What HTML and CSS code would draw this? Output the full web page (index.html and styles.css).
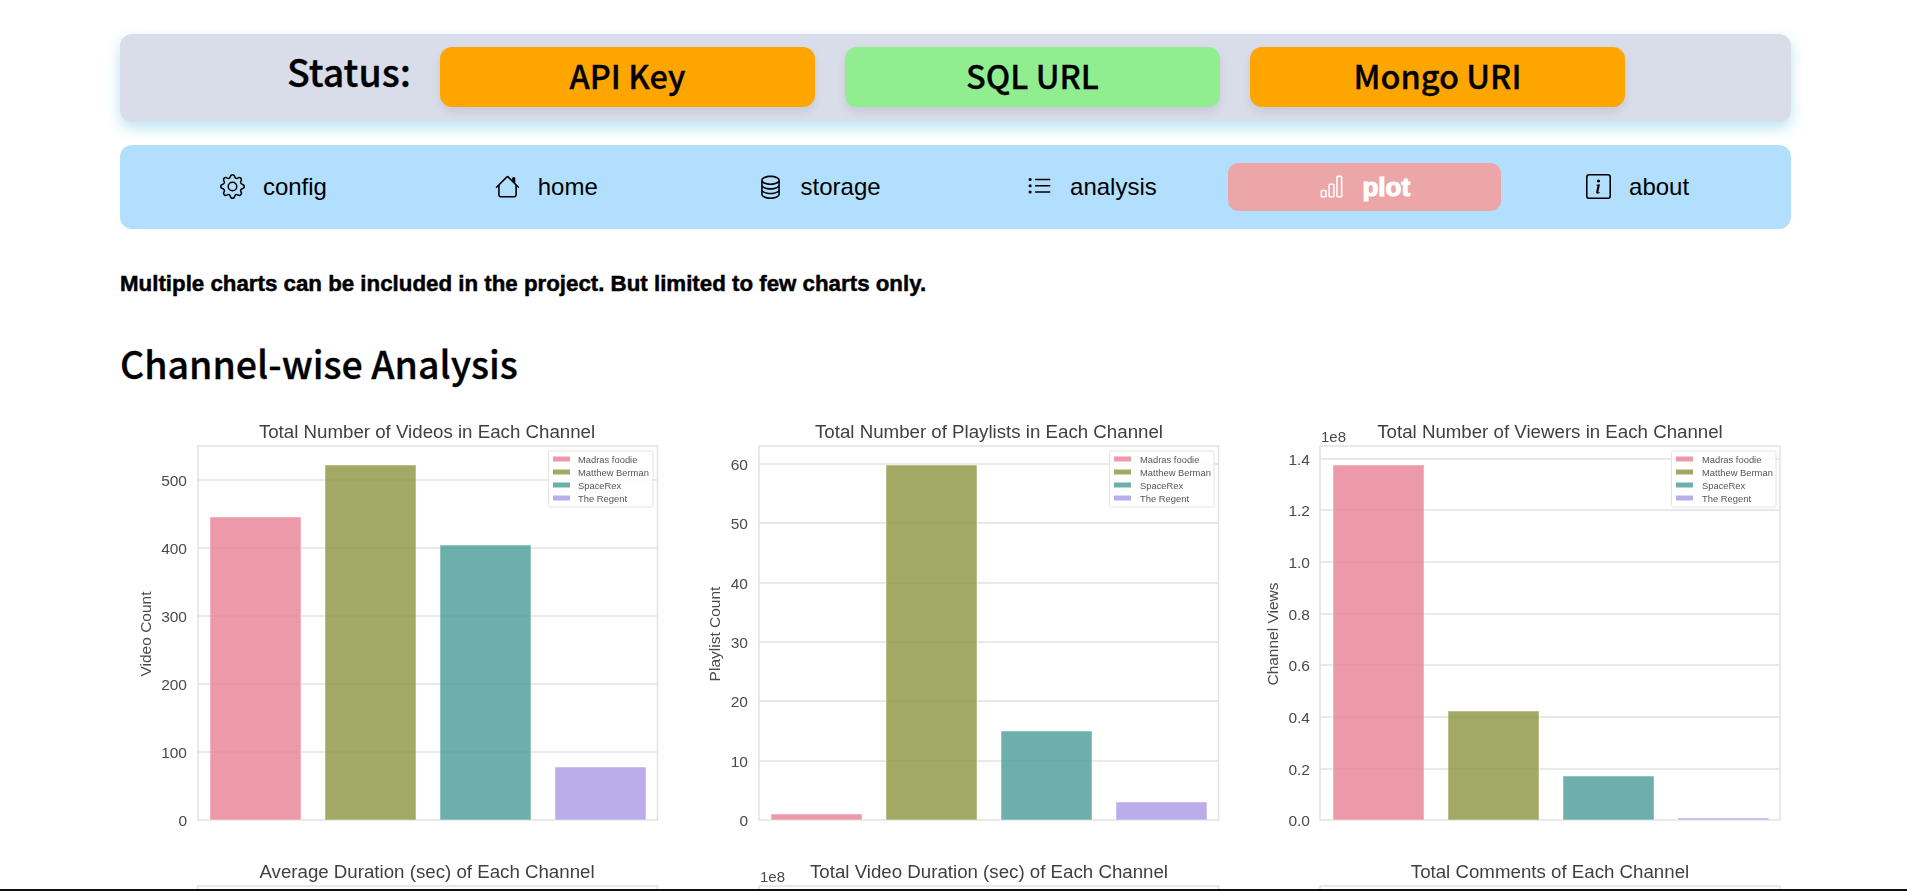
FILE: index.html
```html
<!DOCTYPE html>
<html lang="en">
<head>
	<meta charset="UTF-8">
	<title>Channel-wise Analysis</title>
	<link rel="stylesheet" href="styles.css">
</head>
<body>
	<div class="page">
		<div class="wrap">
			<div class="status">
				<div class="status-label">Status:</div>
				<div class="key orange">API Key</div>
				<div class="key green">SQL URL</div>
				<div class="key orange">Mongo URI</div>
			</div>

			<ul class="nav">
				<li class="nav-item">
					<svg viewBox="0 0 16 16"><path d="M8 4.754a3.246 3.246 0 1 0 0 6.492 3.246 3.246 0 0 0 0-6.492zM5.754 8a2.246 2.246 0 1 1 4.492 0 2.246 2.246 0 0 1-4.492 0z"/><path d="M9.796 1.343c-.527-1.79-3.065-1.79-3.592 0l-.094.319a.873.873 0 0 1-1.255.52l-.292-.16c-1.64-.892-3.433.902-2.54 2.541l.159.292a.873.873 0 0 1-.52 1.255l-.319.094c-1.79.527-1.79 3.065 0 3.592l.319.094a.873.873 0 0 1 .52 1.255l-.16.292c-.892 1.64.901 3.434 2.541 2.54l.292-.159a.873.873 0 0 1 1.255.52l.094.319c.527 1.79 3.065 1.79 3.592 0l.094-.319a.873.873 0 0 1 1.255-.52l.292.16c1.64.893 3.434-.902 2.54-2.541l-.159-.292a.873.873 0 0 1 .52-1.255l.319-.094c1.79-.527 1.79-3.065 0-3.592l-.319-.094a.873.873 0 0 1-.52-1.255l.16-.292c.893-1.64-.902-3.433-2.541-2.54l-.292.159a.873.873 0 0 1-1.255-.52l-.094-.319zm-2.633.283c.246-.835 1.428-.835 1.674 0l.094.319a1.873 1.873 0 0 0 2.693 1.115l.291-.16c.764-.415 1.6.42 1.184 1.185l-.159.292a1.873 1.873 0 0 0 1.116 2.692l.318.094c.835.246.835 1.428 0 1.674l-.319.094a1.873 1.873 0 0 0-1.115 2.693l.16.291c.415.764-.42 1.6-1.185 1.184l-.291-.159a1.873 1.873 0 0 0-2.693 1.116l-.094.318c-.246.835-1.428.835-1.674 0l-.094-.319a1.873 1.873 0 0 0-2.692-1.115l-.292.16c-.764.415-1.6-.42-1.184-1.185l.159-.291A1.873 1.873 0 0 0 1.945 8.93l-.319-.094c-.835-.246-.835-1.428 0-1.674l.319-.094A1.873 1.873 0 0 0 3.06 4.377l-.16-.292c-.415-.764.42-1.6 1.185-1.184l.292.159a1.873 1.873 0 0 0 2.692-1.115l.094-.319z"/></svg>
					<span>config</span>
				</li>
				<li class="nav-item">
					<svg viewBox="0 0 16 16"><path fill-rule="evenodd" d="M2 13.5V7h1v6.5a.5.5 0 0 0 .5.5h9a.5.5 0 0 0 .5-.5V7h1v6.5a1.5 1.5 0 0 1-1.5 1.5h-9A1.5 1.5 0 0 1 2 13.5zm11-11V6l-2-2V2.5a.5.5 0 0 1 .5-.5h1a.5.5 0 0 1 .5.5z"/><path fill-rule="evenodd" d="M7.293 1.5a1 1 0 0 1 1.414 0l6.647 6.646a.5.5 0 0 1-.708.708L8 2.207 1.354 8.854a.5.5 0 1 1-.708-.708L7.293 1.5z"/></svg>
					<span>home</span>
				</li>
				<li class="nav-item">
					<svg viewBox="0 0 16 16"><path d="M4.318 2.687C5.234 2.271 6.536 2 8 2s2.766.27 3.682.687C12.644 3.125 13 3.627 13 4c0 .374-.356.875-1.318 1.313C10.766 5.729 9.464 6 8 6s-2.766-.27-3.682-.687C3.356 4.875 3 4.373 3 4c0-.374.356-.875 1.318-1.313ZM13 5.698V7c0 .374-.356.875-1.318 1.313C10.766 8.729 9.464 9 8 9s-2.766-.27-3.682-.687C3.356 7.875 3 7.373 3 7V5.698c.271.202.58.378.904.525C4.978 6.711 6.427 7 8 7s3.022-.289 4.096-.777A4.92 4.92 0 0 0 13 5.698ZM14 4c0-1.007-.875-1.755-1.904-2.223C11.022 1.289 9.573 1 8 1s-3.022.289-4.096.777C2.875 2.245 2 2.993 2 4v9c0 1.007.875 1.755 1.904 2.223C4.978 15.71 6.427 16 8 16s3.022-.289 4.096-.777C13.125 14.755 14 14.007 14 13V4Zm-1 4.698V10c0 .374-.356.875-1.318 1.313C10.766 11.729 9.464 12 8 12s-2.766-.27-3.682-.687C3.356 10.875 3 10.373 3 10V8.698c.271.202.58.378.904.525C4.978 9.71 6.427 10 8 10s3.022-.289 4.096-.777A4.92 4.92 0 0 0 13 8.698Zm0 3V13c0 .374-.356.875-1.318 1.313C10.766 14.729 9.464 15 8 15s-2.766-.27-3.682-.687C3.356 13.875 3 13.373 3 13v-1.302c.271.202.58.378.904.525C4.978 12.71 6.427 13 8 13s3.022-.289 4.096-.777c.324-.147.633-.323.904-.525Z"/></svg>
					<span>storage</span>
				</li>
				<li class="nav-item">
					<svg viewBox="0 0 16 16"><path fill-rule="evenodd" d="M5 11.5a.5.5 0 0 1 .5-.5h9a.5.5 0 0 1 0 1h-9a.5.5 0 0 1-.5-.5zm0-4a.5.5 0 0 1 .5-.5h9a.5.5 0 0 1 0 1h-9a.5.5 0 0 1-.5-.5zm0-4a.5.5 0 0 1 .5-.5h9a.5.5 0 0 1 0 1h-9a.5.5 0 0 1-.5-.5zm-3 1a1 1 0 1 0 0-2 1 1 0 0 0 0 2zm0 4a1 1 0 1 0 0-2 1 1 0 0 0 0 2zm0 4a1 1 0 1 0 0-2 1 1 0 0 0 0 2z"/></svg>
					<span>analysis</span>
				</li>
				<li class="nav-item active">
					<svg viewBox="0 0 16 16"><path d="M4 11H2v3h2v-3zm5-4H7v7h2V7zm5-5v12h-2V2h2zm-2-1a1 1 0 0 0-1 1v12a1 1 0 0 0 1 1h2a1 1 0 0 0 1-1V2a1 1 0 0 0-1-1h-2zM6 7a1 1 0 0 1 1-1h2a1 1 0 0 1 1 1v7a1 1 0 0 1-1 1H7a1 1 0 0 1-1-1V7zm-5 4a1 1 0 0 1 1-1h2a1 1 0 0 1 1 1v3a1 1 0 0 1-1 1H2a1 1 0 0 1-1-1v-3z"/></svg>
					<span>plot</span>
				</li>
				<li class="nav-item">
					<svg viewBox="0 0 16 16"><path d="M14 1a1 1 0 0 1 1 1v12a1 1 0 0 1-1 1H2a1 1 0 0 1-1-1V2a1 1 0 0 1 1-1h12zM2 0a2 2 0 0 0-2 2v12a2 2 0 0 0 2 2h12a2 2 0 0 0 2-2V2a2 2 0 0 0-2-2H2z"/><path d="m8.93 6.588-2.29.287-.082.38.45.083c.294.07.352.176.288.469l-.738 3.468c-.194.897.105 1.319.808 1.319.545 0 1.178-.252 1.465-.598l.088-.416c-.2.176-.492.246-.686.246-.275 0-.375-.193-.304-.533L8.93 6.588zM9 4.5a1 1 0 1 1-2 0 1 1 0 0 1 2 0z"/></svg>
					<span>about</span>
				</li>
			</ul>

			<p class="note">Multiple charts can be included in the project. But limited to few charts only.</p>
			<h2 class="title">Channel-wise Analysis</h2>

			<div class="charts">
				<!-- row 1 -->
				<svg class="chart" viewBox="0 0 549 440">
					<text class="chart-title" x="307" y="20">Total Number of Videos in Each Channel</text>
					<text class="axis-label" transform="translate(31 216) rotate(-90)">Video Count</text>
					<rect class="frame" x="78" y="28" width="459.5" height="374"/>
					<line class="grid" x1="78" x2="537.5" y1="62" y2="62"/>
					<line class="grid" x1="78" x2="537.5" y1="130" y2="130"/>
					<line class="grid" x1="78" x2="537.5" y1="198" y2="198"/>
					<line class="grid" x1="78" x2="537.5" y1="266" y2="266"/>
					<line class="grid" x1="78" x2="537.5" y1="334" y2="334"/>
					<text class="tick" x="67" y="67.5">500</text>
					<text class="tick" x="67" y="135.5">400</text>
					<text class="tick" x="67" y="203.5">300</text>
					<text class="tick" x="67" y="271.5">200</text>
					<text class="tick" x="67" y="339.5">100</text>
					<text class="tick" x="67" y="407.5">0</text>
					<rect class="bar pink" x="90" y="99" width="91" height="303"/>
					<rect class="bar olive" x="205" y="47" width="91" height="355"/>
					<rect class="bar teal" x="320" y="127" width="91" height="275"/>
					<rect class="bar purple" x="435" y="349" width="91" height="53"/>
					<rect class="legend" x="428.5" y="33" width="104.5" height="56" rx="1.5"/>
					<rect class="swatch pink" x="433" y="38.5" width="17" height="5"/>
					<rect class="swatch olive" x="433" y="51.5" width="17" height="5"/>
					<rect class="swatch teal" x="433" y="64.5" width="17" height="5"/>
					<rect class="swatch purple" x="433" y="77.5" width="17" height="5"/>
					<text class="legend-text" x="458" y="44.5">Madras foodie</text>
					<text class="legend-text" x="458" y="57.5">Matthew Berman</text>
					<text class="legend-text" x="458" y="70.5">SpaceRex</text>
					<text class="legend-text" x="458" y="83.5">The Regent</text>
				</svg>

				<svg class="chart" viewBox="0 0 549 440">
					<text class="chart-title" x="308" y="20">Total Number of Playlists in Each Channel</text>
					<text class="axis-label" transform="translate(39 216) rotate(-90)">Playlist Count</text>
					<rect class="frame" x="78" y="28" width="459.5" height="374"/>
					<line class="grid" x1="78" x2="537.5" y1="46" y2="46"/>
					<line class="grid" x1="78" x2="537.5" y1="105" y2="105"/>
					<line class="grid" x1="78" x2="537.5" y1="165" y2="165"/>
					<line class="grid" x1="78" x2="537.5" y1="224" y2="224"/>
					<line class="grid" x1="78" x2="537.5" y1="283" y2="283"/>
					<line class="grid" x1="78" x2="537.5" y1="343" y2="343"/>
					<text class="tick" x="67" y="51.5">60</text>
					<text class="tick" x="67" y="110.5">50</text>
					<text class="tick" x="67" y="170.5">40</text>
					<text class="tick" x="67" y="229.5">30</text>
					<text class="tick" x="67" y="288.5">20</text>
					<text class="tick" x="67" y="348.5">10</text>
					<text class="tick" x="67" y="407.5">0</text>
					<rect class="bar pink" x="90" y="396" width="91" height="6"/>
					<rect class="bar olive" x="205" y="47" width="91" height="355"/>
					<rect class="bar teal" x="320" y="313" width="91" height="89"/>
					<rect class="bar purple" x="435" y="384" width="91" height="18"/>
					<rect class="legend" x="428.5" y="33" width="104.5" height="56" rx="1.5"/>
					<rect class="swatch pink" x="433" y="38.5" width="17" height="5"/>
					<rect class="swatch olive" x="433" y="51.5" width="17" height="5"/>
					<rect class="swatch teal" x="433" y="64.5" width="17" height="5"/>
					<rect class="swatch purple" x="433" y="77.5" width="17" height="5"/>
					<text class="legend-text" x="459" y="44.5">Madras foodie</text>
					<text class="legend-text" x="459" y="57.5">Matthew Berman</text>
					<text class="legend-text" x="459" y="70.5">SpaceRex</text>
					<text class="legend-text" x="459" y="83.5">The Regent</text>
				</svg>

				<svg class="chart" viewBox="0 0 549 440">
					<text class="chart-title" x="308" y="20">Total Number of Viewers in Each Channel</text>
					<text class="offset" x="79" y="24">1e8</text>
					<text class="axis-label" transform="translate(36 216) rotate(-90)">Channel Views</text>
					<rect class="frame" x="78" y="28" width="460" height="374"/>
					<line class="grid" x1="78" x2="538" y1="41" y2="41"/>
					<line class="grid" x1="78" x2="538" y1="92" y2="92"/>
					<line class="grid" x1="78" x2="538" y1="144" y2="144"/>
					<line class="grid" x1="78" x2="538" y1="196" y2="196"/>
					<line class="grid" x1="78" x2="538" y1="247" y2="247"/>
					<line class="grid" x1="78" x2="538" y1="299" y2="299"/>
					<line class="grid" x1="78" x2="538" y1="351" y2="351"/>
					<text class="tick" x="68" y="46.5">1.4</text>
					<text class="tick" x="68" y="97.5">1.2</text>
					<text class="tick" x="68" y="149.5">1.0</text>
					<text class="tick" x="68" y="201.5">0.8</text>
					<text class="tick" x="68" y="252.5">0.6</text>
					<text class="tick" x="68" y="304.5">0.4</text>
					<text class="tick" x="68" y="356.5">0.2</text>
					<text class="tick" x="68" y="407.5">0.0</text>
					<rect class="bar pink" x="91" y="47" width="91" height="355"/>
					<rect class="bar olive" x="206" y="293" width="91" height="109"/>
					<rect class="bar teal" x="321" y="358" width="91" height="44"/>
					<rect class="bar purple" x="436" y="400" width="91" height="2"/>
					<rect class="legend" x="429.5" y="33" width="104.5" height="56" rx="1.5"/>
					<rect class="swatch pink" x="434" y="38.5" width="17" height="5"/>
					<rect class="swatch olive" x="434" y="51.5" width="17" height="5"/>
					<rect class="swatch teal" x="434" y="64.5" width="17" height="5"/>
					<rect class="swatch purple" x="434" y="77.5" width="17" height="5"/>
					<text class="legend-text" x="460" y="44.5">Madras foodie</text>
					<text class="legend-text" x="460" y="57.5">Matthew Berman</text>
					<text class="legend-text" x="460" y="70.5">SpaceRex</text>
					<text class="legend-text" x="460" y="83.5">The Regent</text>
				</svg>

				<!-- row 2, only the top shows above the fold -->
				<svg class="chart" viewBox="0 0 549 440">
					<text class="chart-title" x="307" y="20">Average Duration (sec) of Each Channel</text>
					<rect class="frame" x="78" y="28" width="459.5" height="374"/>
				</svg>
				<svg class="chart" viewBox="0 0 549 440">
					<text class="chart-title" x="308" y="20">Total Video Duration (sec) of Each Channel</text>
					<text class="offset" x="79" y="24">1e8</text>
					<rect class="frame" x="78" y="28" width="459.5" height="374"/>
				</svg>
				<svg class="chart" viewBox="0 0 549 440">
					<text class="chart-title" x="308" y="20">Total Comments of Each Channel</text>
					<text class="tick" x="68" y="41">250000</text>
					<rect class="frame" x="78" y="28" width="460" height="374"/>
				</svg>
			</div>
		</div>
		<div class="bottom-line"></div>
	</div>
</body>
</html>
```

FILE: styles.css
```css
body,ul,li,p,h2{
	margin: 0;
	padding: 0;
}
body{
	background: #fff;
	color: #000;
	font-family: 'Liberation Sans', Arial, sans-serif;
}
.page{
	display: flex;
	flex-direction: column;
	height: 100vh;
	overflow: hidden;
}
.wrap{
	flex: 1;
	min-height: 0;
	overflow: hidden;
	padding: 34px 116px 0 120px;
}

/* status bar */
.status{
	display: flex;
	gap: 30px;
	height: 88px;
	box-sizing: border-box;
	padding: 13px 0 0 167px;
	background: #d9dce9;
	border-radius: 12px;
	box-shadow: 0 6px 14px rgba(90, 190, 225, .42);
	font-family: 'Noto Sans CJK SC', 'Noto Sans', sans-serif;
}
.status-label{
	font-size: 37.5px;
	font-weight: 500;
	line-height: 47px;
	width: 123px;
	white-space: nowrap;
	-webkit-text-stroke: .3px #000;
}
.key{
	width: 375px;
	height: 60px;
	border-radius: 12px;
	font-size: 32.5px;
	font-weight: 500;
	line-height: 55px;
	text-align: center;
	box-shadow: 0 5px 10px rgba(0, 0, 0, .08);
	-webkit-text-stroke: .3px #000;
}
.orange{
	background: #ffa500;
}
.green{
	background: #90ee90;
}

/* nav */
.nav{
	list-style: none;
	display: grid;
	grid-template-columns: repeat(6, 1fr);
	margin-top: 23px;
	padding: 18px 17px;
	background: #b3dfff;
	border-radius: 12px;
}
.nav-item{
	display: flex;
	align-items: center;
	justify-content: center;
	gap: 18px;
	height: 48px;
	font-size: 24px;
	border-radius: 10px;
}
.nav-item svg{
	width: 25px;
	height: 25px;
	margin-top: -2px;
	fill: currentColor;
}
.nav-item.active{
	background: #eca6a8;
	color: #fff;
	font-size: 26px;
	font-weight: bold;
	-webkit-text-stroke: 1.2px #fff;
}

.note{
	margin-top: 41px;
	font-size: 22.3px;
	font-weight: bold;
	line-height: 28px;
	-webkit-text-stroke: .5px #000;
}
.title{
	margin-top: 35px;
	font-family: 'Noto Sans CJK SC', 'Noto Sans', sans-serif;
	font-size: 37.5px;
	font-weight: 500;
	line-height: 60px;
	-webkit-text-stroke: .3px #000;
}

/* charts */
.charts{
	display: grid;
	grid-template-columns: repeat(3, 549px);
	column-gap: 12px;
	margin-top: 25px;
}
.chart{
	display: block;
	width: 549px;
	height: 440px;
	font-family: 'Liberation Sans', Arial, sans-serif;
	filter: blur(.6px);
}
.chart-title{
	font-size: 18.7px;
	text-anchor: middle;
	fill: #3f3f3f;
}
.axis-label{
	font-size: 15.5px;
	text-anchor: middle;
	fill: #4a4a4a;
}
.tick{
	font-size: 15.5px;
	text-anchor: end;
	fill: #4a4a4a;
}
.offset{
	font-size: 15px;
	fill: #4a4a4a;
}
.frame{
	fill: none;
	stroke: #e2e2e2;
	stroke-width: 1.5;
}
.grid{
	stroke: #e2e2e2;
	stroke-width: 1.5;
}
.bar{
	fill-opacity: .8;
	stroke: #fff;
	stroke-opacity: .5;
	stroke-width: 1;
}
.pink{
	fill: #e78194;
}
.olive{
	fill: #8b933d;
}
.teal{
	fill: #489c96;
}
.purple{
	fill: #a998e3;
}
.swatch{
	fill-opacity: .8;
}
.legend{
	fill: #fff;
	fill-opacity: .8;
	stroke: #e2e2e2;
	stroke-width: 1;
}
.legend-text{
	font-size: 9.4px;
	fill: #555;
}

.bottom-line{
	height: 2px;
	background: #111;
}
```
